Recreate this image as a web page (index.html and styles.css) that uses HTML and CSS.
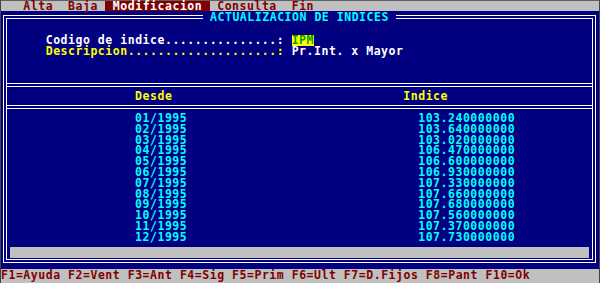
FILE: index.html
```html
<!DOCTYPE html>
<html>
<head>
<title>Actualizacion de indices</title>
<meta charset="utf-8">
<link rel="stylesheet" href="styles.css">
</head>
<body>
<div class="screen">
<div class="menu"><span>   Alta  Baja </span><span class="sel"> Modificacion </span><span> Consulta  Fin</span></div>
<div class="desk">
<fieldset class="frame">
	<legend class="title"> ACTUALIZACION DE INDICES </legend>
	<div class="info">
		<div class="field"><span class="lbl">Codigo de indice...............: </span><span class="code">IPM</span></div>
		<div class="field"><span class="lbl-y">Descripcion....................: </span><span class="val">Pr.Int. x Mayor</span></div>
	</div>
	<div class="cols"><span>Desde</span><span>Indice</span></div>
	<div class="rows">
		<div class="row"><span>01/1995</span><span>103.240000000</span></div>
		<div class="row"><span>02/1995</span><span>103.640000000</span></div>
		<div class="row"><span>03/1995</span><span>103.020000000</span></div>
		<div class="row"><span>04/1995</span><span>106.470000000</span></div>
		<div class="row"><span>05/1995</span><span>106.600000000</span></div>
		<div class="row"><span>06/1995</span><span>106.930000000</span></div>
		<div class="row"><span>07/1995</span><span>107.330000000</span></div>
		<div class="row"><span>08/1995</span><span>107.660000000</span></div>
		<div class="row"><span>09/1995</span><span>107.680000000</span></div>
		<div class="row"><span>10/1995</span><span>107.560000000</span></div>
		<div class="row"><span>11/1995</span><span>107.370000000</span></div>
		<div class="row"><span>12/1995</span><span>107.730000000</span></div>
	</div>
	<div class="scroll"></div>
</fieldset>
</div>
<div class="keys">F1=Ayuda F2=Vent F3=Ant F4=Sig F5=Prim F6=Ult F7=D.Fijos F8=Pant F10=Ok</div>
</div>
</body>
</html>
```

FILE: styles.css
```css
html,body{margin:0;padding:0;background:#000080}
body{font:bold 11.5px "DejaVu Sans Mono",monospace;letter-spacing:0.53px}
.screen{width:600px;height:283px;box-sizing:border-box;border-top:1px solid #606060;border-left:1px solid #404040;border-right:1px solid #404040;display:flex;flex-direction:column;background:#000080}
.menu{height:10px;line-height:10px;background:#c0c0c0;color:#800000;white-space:pre}
.menu .sel{background:#800000;color:#fff;display:inline-block;height:10px}
.desk{flex:1;padding:0 3px 0 2px}
.frame{margin:0;padding:0;height:252px;box-sizing:border-box;border:4px double #fff;min-width:0}
.title{margin:0 auto;padding:0;line-height:12px;color:#00ffff;white-space:pre}
.info{height:60px;box-sizing:border-box;padding:11.7px 0 0 38.7px}
.field{line-height:11px;white-space:pre}
.lbl{color:#fff}
.lbl-y{color:#ffff00}
.val{color:#fff}
.code{display:inline-block;line-height:11px;background:#ffff00;color:#00a000}
.cols{border-top:4px double #fff;border-bottom:4px double #fff;padding:1px 0 0 128.1px;height:17px;display:grid;grid-template-columns:268.2px auto;line-height:17px;color:#ffff00}
.rows{padding:4px 0 0 128.1px;height:129.6px;color:#00ffff}
.row{display:grid;grid-template-columns:283.1px auto;line-height:10.8px;height:10.8px}
.scroll{height:11px;margin:4px 3px 0;background:#c0c0c0}
.keys{height:14px;line-height:13px;background:#c0c0c0;color:#800000;white-space:pre}
```
